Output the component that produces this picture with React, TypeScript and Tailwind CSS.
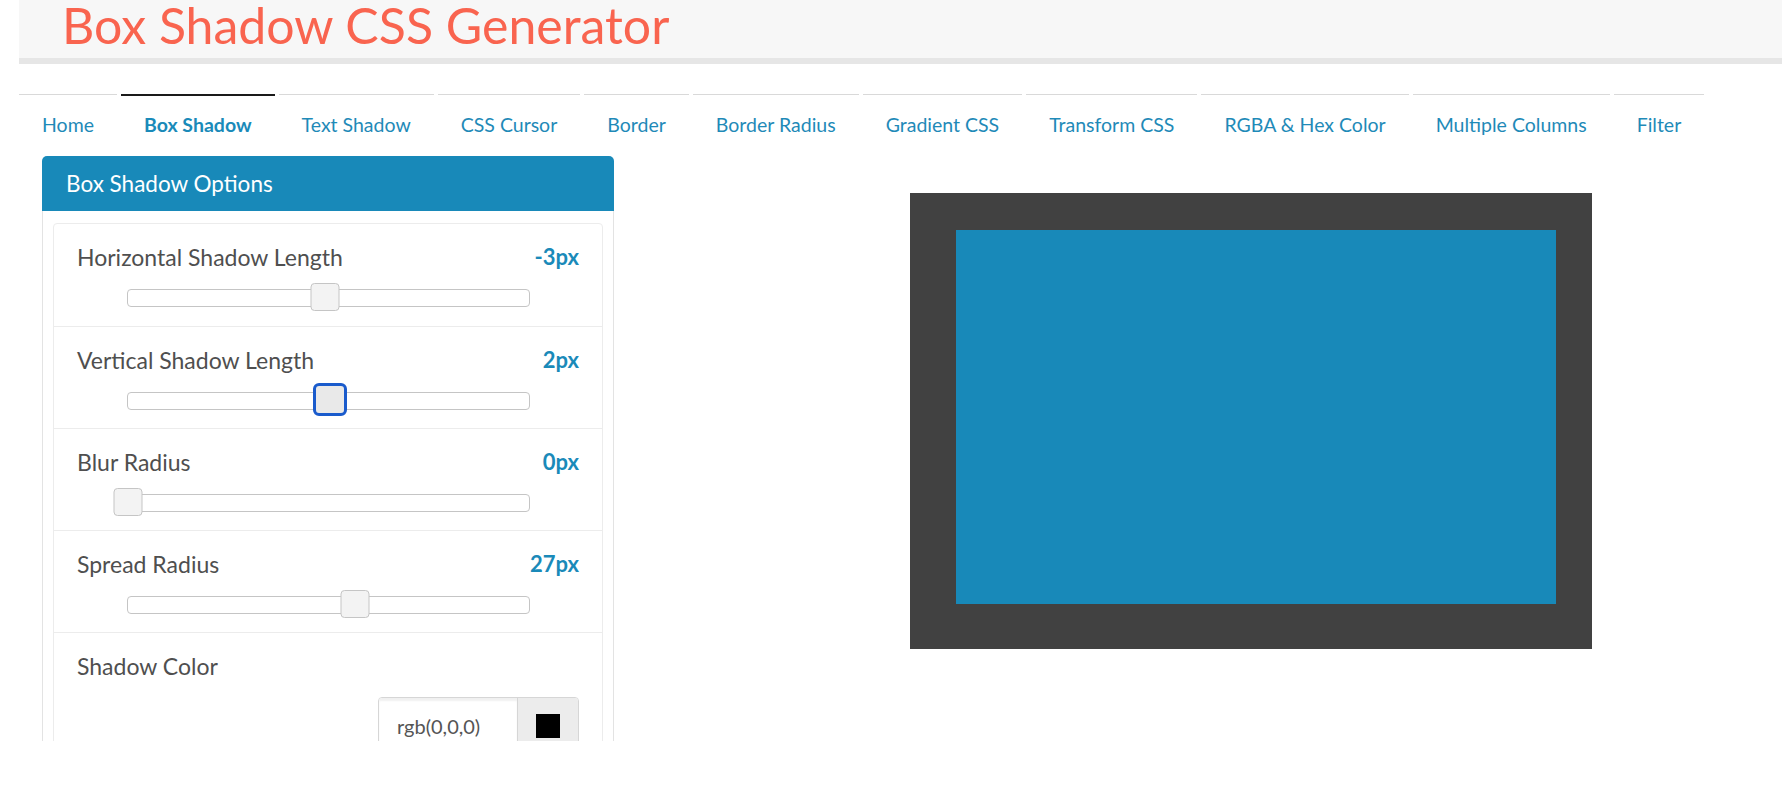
import React from "react";

const tabs = [
  "Home",
  "Box Shadow",
  "Text Shadow",
  "CSS Cursor",
  "Border",
  "Border Radius",
  "Gradient CSS",
  "Transform CSS",
  "RGBA & Hex Color",
  "Multiple Columns",
  "Filter",
];

function Slider({ pct, focused }: { pct: number; focused?: boolean }) {
  return (
    <div className="mx-auto mt-[17px] w-[403px]">
      <div className="relative h-[18px] rounded-[4px] border border-[#c5c5c5] bg-white">
        {focused ? (
          <div
            className="absolute top-[-10px] h-[33px] w-[34px] -translate-x-1/2 rounded-[6px] border-[3px] border-[#1a5bcc] bg-[#e9e9e9]"
            style={{ left: `${pct}%` }}
          />
        ) : (
          <div
            className="absolute top-[-7px] h-[28px] w-[29px] -translate-x-1/2 rounded-[4px] border border-[#c5c5c5] bg-[#f3f3f3]"
            style={{ left: `${pct}%` }}
          />
        )}
      </div>
    </div>
  );
}

function Item({
  label,
  value,
  pct,
  focused,
  first,
}: {
  label: string;
  value: string;
  pct: number;
  focused?: boolean;
  first?: boolean;
}) {
  return (
    <div className={`h-[102px] px-[23px] pt-[18px] ${first ? "" : "border-t border-[#ececec]"}`}>
      <div className="flex h-[30px] items-center justify-between leading-[30px]">
        <span className="text-[23px] text-[#4f4f4f]">{label}</span>
        <span className="text-[22px] font-bold text-[#1a8ab9]">{value}</span>
      </div>
      <Slider pct={pct} focused={focused} />
    </div>
  );
}

export default function App() {
  return (
    <div className="h-[805px] w-[1782px] overflow-hidden bg-white font-['Lato',sans-serif]">
      <div className="h-[741px] overflow-hidden">
        <header className="ml-[19px] h-[64px] border-b-[6px] border-[#e6e6e6] bg-[#f7f7f7] pl-[43px]">
          <h1 className="text-[50px] leading-[50px] text-[#f9644f]">Box Shadow CSS Generator</h1>
        </header>

        <nav className="ml-[19px] mt-[30px] flex h-[62px] gap-[4px]">
          {tabs.map((t) =>
            t === "Box Shadow" ? (
              <div
                key={t}
                className="border-t-2 border-[#1a1a1a] px-[23px] pt-[15px] text-[19.5px] font-bold leading-[28px] text-[#1a8ab9]"
              >
                {t}
              </div>
            ) : (
              <div
                key={t}
                className="border-t border-[#d9d9d9] px-[23px] pt-[16px] text-[19.5px] leading-[28px] text-[#1f8ab8]"
              >
                {t}
              </div>
            )
          )}
        </nav>

        <div className="flex">
          <div className="ml-[42px] w-[572px] shrink-0">
            <div className="flex h-[55px] items-center rounded-t-[5px] bg-[#1889b9] px-[24px] text-[22.5px] text-white">
              Box Shadow Options
            </div>
            <div className="border-x border-b border-[#e3e3e3] px-[10px] pt-[12px]">
              <div className="rounded-[4px] border border-[#ececec]">
                <Item first label="Horizontal Shadow Length" value="-3px" pct={49.3} />
                <Item label="Vertical Shadow Length" value="2px" pct={50.5} focused />
                <Item label="Blur Radius" value="0px" pct={0} />
                <Item label="Spread Radius" value="27px" pct={56.7} />
                <div className="h-[160px] border-t border-[#ececec] px-[23px] pt-[18px]">
                  <div className="flex h-[30px] items-center leading-[30px]">
                    <span className="text-[23px] text-[#4f4f4f]">Shadow Color</span>
                  </div>
                  <div className="mt-[16px] flex justify-end">
                    <div className="flex h-[58px] w-[201px] overflow-hidden rounded-[4px] border border-[#d6d6d6]">
                      <div className="flex w-[139px] items-center border-r border-[#d6d6d6] bg-white pl-[18px] text-[20px] text-[#555] shadow-[inset_0_3px_2px_rgba(0,0,0,0.06)]">
                        rgb(0,0,0)
                      </div>
                      <div className="flex flex-1 items-center justify-center bg-[#ececec]">
                        <div className="h-[24px] w-[24px] bg-black" />
                      </div>
                    </div>
                  </div>
                </div>
              </div>
            </div>
          </div>

          <div className="flex-1 pl-[342px] pt-[74px]">
            <div className="h-[374px] w-[600px] bg-[#1889b9] shadow-[-5px_4px_0_41px_#414141]" />
          </div>
        </div>
      </div>
    </div>
  );
}
